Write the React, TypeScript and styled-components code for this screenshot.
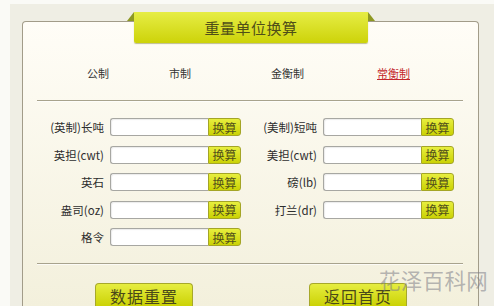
import React from "react";
import styled, { createGlobalStyle } from "styled-components";

const Global = createGlobalStyle`
  html, body { margin: 0; padding: 0; }
  body {
    background: #fafaf6;
    font-family: "Noto Sans CJK SC", "Noto Sans", "DejaVu Sans", sans-serif;
    overflow: hidden;
  }
`;

const Frame = styled.div`
  margin: 4px 0 0 10px;
  height: 302px;
  background: #efeee4;
  padding: 17px 15px 0 12px;
  box-sizing: border-box;
`;

const Panel = styled.div`
  position: relative;
  width: 457px;
  height: 285px;
  box-sizing: border-box;
  border: 1px solid #a29c89;
  border-bottom: none;
  border-radius: 4px 4px 0 0;
  background: linear-gradient(#fffdf7, #f3f0dc);
  display: flex;
  flex-direction: column;
  & > * { flex-shrink: 0; }
`;

const TitleTab = styled.div`
  position: absolute;
  left: 111px;
  top: -10px;
  width: 234px;
  height: 31px;
  background: linear-gradient(#e6ed45, #cdd309);
  border-radius: 0 0 2px 2px;
  box-shadow: 0 1px 1px rgba(110, 110, 20, 0.45);
  display: flex;
  align-items: center;
  justify-content: center;
  color: #4f4e18;
  font-size: 15px;
  letter-spacing: 0.5px;

  &::before, &::after {
    content: "";
    position: absolute;
    top: 0;
    width: 0;
    height: 0;
    border-bottom: 9px solid #8e9822;
  }
  &::before {
    left: -7px;
    border-left: 7px solid transparent;
  }
  &::after {
    right: -7px;
    border-right: 7px solid transparent;
  }
`;

const UnitTabs = styled.div`
  display: grid;
  grid-template-columns: 82px 102px 106px auto;
  margin: 43px 0 0 64px;
  height: 16px;
  align-items: center;
  font-size: 11px;
  line-height: 16px;
`;

const UnitTab = styled.span<{ $active?: boolean }>`
  color: ${(p) => (p.$active ? "#c3262c" : "#333")};
  text-decoration: ${(p) => (p.$active ? "underline" : "none")};
  white-space: nowrap;
`;

const Divider = styled.div<{ $top: number }>`
  height: 1px;
  background: #a8a38d;
  box-shadow: 0 1px 0 rgba(255, 255, 255, 0.7);
  margin: ${(p) => p.$top}px 15px 0 14px;
`;

const Fields = styled.div`
  display: flex;
  flex-direction: column;
  gap: 9.5px;
  margin: 17px 0 0 14px;
`;

const Row = styled.div`
  display: flex;
  gap: 9px;
  height: 18px;
`;

const Field = styled.div`
  display: flex;
  align-items: center;
  height: 18px;
`;

const Label = styled.span<{ $w: number }>`
  width: ${(p) => p.$w}px;
  margin-right: 6px;
  text-align: right;
  font-size: 11.5px;
  color: #2e2e2e;
  white-space: nowrap;
`;

const Input = styled.div`
  width: 98px;
  height: 18px;
  box-sizing: border-box;
  background: #fff;
  border: 1px solid #a7a7a2;
  border-right: none;
  border-radius: 3px 0 0 3px;
  box-shadow: inset 1px 1px 1px rgba(0, 0, 0, 0.08);
`;

const CalcButton = styled.div`
  width: 33px;
  height: 18px;
  box-sizing: border-box;
  background: linear-gradient(#e7ee3e, #cbd204);
  border: 1px solid #a4a526;
  border-radius: 0 3px 3px 0;
  color: #52511a;
  font-size: 12px;
  display: flex;
  align-items: center;
  justify-content: center;
`;

const Actions = styled.div`
  display: flex;
  gap: 116px;
  margin: 19px 0 0 72px;
`;

const BigButton = styled.div`
  width: 98px;
  height: 23px;
  box-sizing: border-box;
  background: linear-gradient(#e6ed40, #cbd205);
  border: 1px solid #a7a82a;
  border-bottom: none;
  border-radius: 4px 4px 0 0;
  color: #4a4918;
  font-size: 16px;
  line-height: 17px;
  letter-spacing: 1px;
  display: flex;
  align-items: center;
  justify-content: center;
  padding-top: 2px;
`;

const Watermark = styled.div`
  position: absolute;
  left: 379px;
  top: 268px;
  font-size: 21.5px;
  line-height: 24px;
  color: rgba(125, 125, 135, 0.55);
  letter-spacing: 0.3px;
  pointer-events: none;
  white-space: nowrap;
`;

type F = { label: string };
const rows: [F, F | null][] = [
  [{ label: "(英制)长吨" }, { label: "(美制)短吨" }],
  [{ label: "英担(cwt)" }, { label: "美担(cwt)" }],
  [{ label: "英石" }, { label: "磅(lb)" }],
  [{ label: "盎司(oz)" }, { label: "打兰(dr)" }],
  [{ label: "格令" }, null],
];

function FieldItem({ f }: { f: F }) {
  return (
    <Field>
      <Label $w={67}>{f.label}</Label>
      <Input />
      <CalcButton>换算</CalcButton>
    </Field>
  );
}

export default function App() {
  return (
    <>
      <Global />
      <Frame>
        <Panel>
          <TitleTab>重量单位换算</TitleTab>
          <UnitTabs>
            <UnitTab>公制</UnitTab>
            <UnitTab>市制</UnitTab>
            <UnitTab>金衡制</UnitTab>
            <UnitTab $active>常衡制</UnitTab>
          </UnitTabs>
          <Divider $top={19} />
          <Fields>
            {rows.map(([a, b], i) => (
              <Row key={i}>
                <FieldItem f={a} />
                {b && <FieldItem f={b} />}
              </Row>
            ))}
          </Fields>
          <Divider $top={17} />
          <Actions>
            <BigButton>数据重置</BigButton>
            <BigButton>返回首页</BigButton>
          </Actions>
        </Panel>
      </Frame>
      <Watermark>花泽百科网</Watermark>
    </>
  );
}
